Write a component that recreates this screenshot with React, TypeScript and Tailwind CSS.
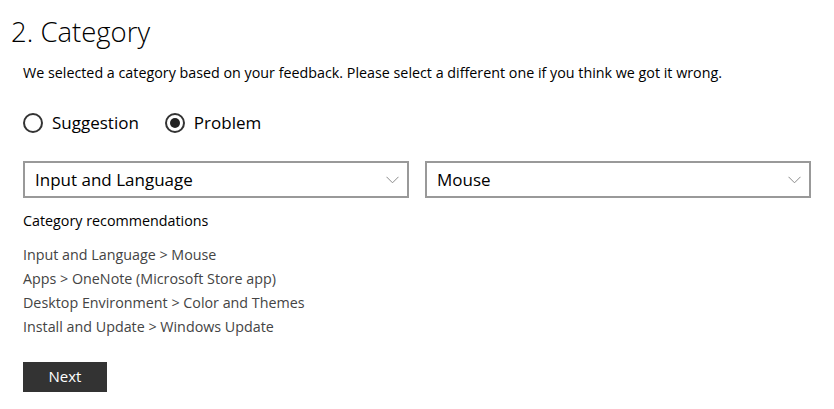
import React from "react";

const font = { fontFamily: '"Open Sans", "Noto Sans", sans-serif' };

function Chevron() {
  return (
    <svg width="13" height="8" viewBox="0 0 13 8" className="shrink-0">
      <path d="M0.5 0.8 L6.5 6.8 L12.5 0.8" fill="none" stroke="#8a8a8a" strokeWidth="1" />
    </svg>
  );
}

function Select({ label }: { label: string }) {
  return (
    <div className="flex h-[37px] w-[386px] items-center justify-between border-2 border-[#999999] bg-white pl-[10px] pr-[8px] pt-[2px]">
      <span className="text-[17px] text-black">{label}</span>
      <Chevron />
    </div>
  );
}

function Radio({ checked, label }: { checked?: boolean; label: string }) {
  return (
    <div className="flex items-center gap-[9px]">
      <div className="flex h-[20px] w-[20px] items-center justify-center rounded-full border-2 border-[#333333]">
        {checked && <div className="h-[10px] w-[10px] rounded-full bg-[#222222]" />}
      </div>
      <span className="text-[17px] text-black">{label}</span>
    </div>
  );
}

export default function App() {
  return (
    <div className="h-[409px] w-[834px] bg-white" style={font}>
      <div className="pl-[11px] pt-[14px]">
        <h1 className="text-[27.5px] font-light leading-[36px] text-black">2. Category</h1>
      </div>
      <div className="pl-[23px]">
        <p className="mt-[13px] text-[14.3px] leading-[20px] text-black">
          We selected a category based on your feedback. Please select a different one if you think we got it wrong.
        </p>
        <div className="mt-[27px] flex items-center gap-[26px]">
          <Radio label="Suggestion" />
          <Radio checked label="Problem" />
        </div>
        <div className="mt-[25px] flex gap-[16px]">
          <Select label="Input and Language" />
          <Select label="Mouse" />
        </div>
        <p className="mt-[13px] text-[14.3px] leading-[20px] text-black">Category recommendations</p>
        <ul className="mt-[12px] flex flex-col text-[14.3px] leading-[24px] text-[#444444]">
          <li>Input and Language &gt; Mouse</li>
          <li>Apps &gt; OneNote (Microsoft Store app)</li>
          <li>Desktop Environment &gt; Color and Themes</li>
          <li>Install and Update &gt; Windows Update</li>
        </ul>
        <button className="mt-[23px] flex h-[30px] w-[84px] items-center justify-center bg-[#333333] text-[15px] text-white">
          Next
        </button>
      </div>
    </div>
  );
}
